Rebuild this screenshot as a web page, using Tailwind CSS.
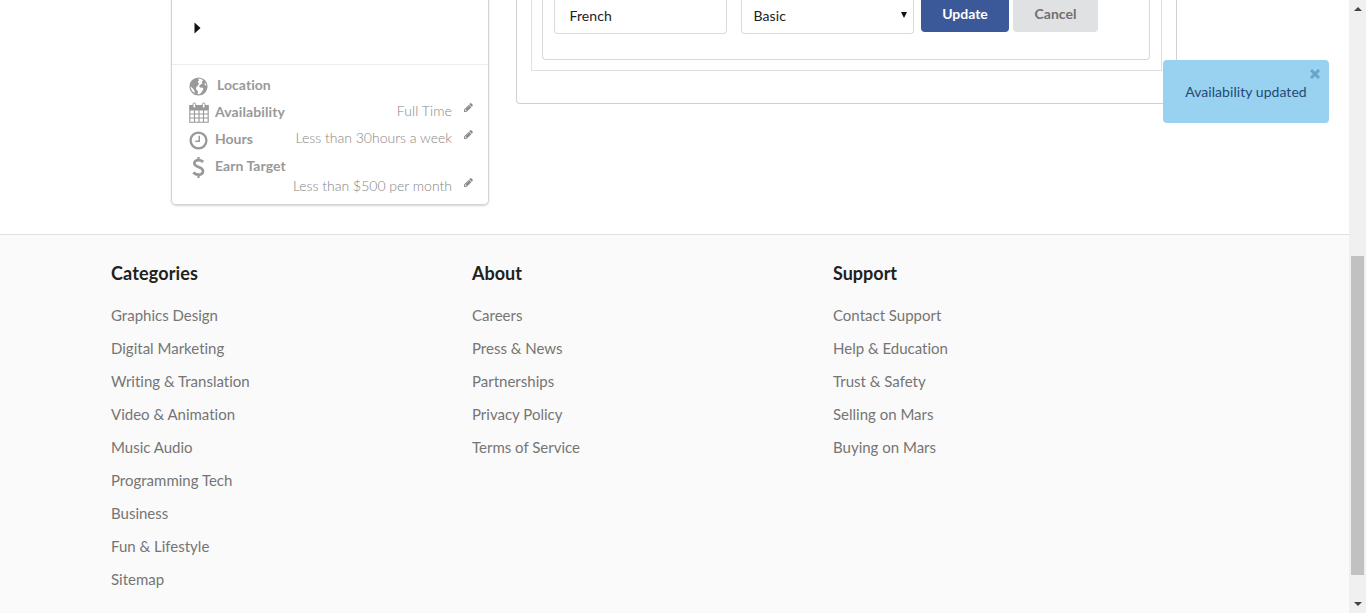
<!DOCTYPE html>
<html lang="en">
<head>
<meta charset="utf-8">
<title>Profile</title>
<script src="https://cdn.jsdelivr.net/npm/@tailwindcss/browser@4"></script>
</head>
<body class="h-[613px] w-[1366px] overflow-hidden bg-white font-['Lato',sans-serif] text-[14px] text-[#212121] [font-variant-ligatures:none]">
<svg class="hidden">
  <symbol id="pencil" viewBox="0 0 1536 1536"><path d="M363 1408l91-91-235-235-91 91v107h128v128h107zM886 480q0-22-22-22-10 0-17 7l-542 542q-7 7-7 17 0 22 22 22 10 0 17-7l542-542q7-7 7-17zM832 288l416 416-832 832H0v-416zM1515 384q0 53-37 90l-166 166-416-416 166-165q36-38 90-38 53 0 91 38l235 234q37 39 37 91z"/></symbol>
</svg>
<div class="flex h-full">
  <div class="flex w-[1349px] flex-col">
    <main class="flex h-[234px] items-start gap-[27px] pl-[171px]">
      <section class="h-[205px] w-[318px] rounded-b-[5px] border border-t-0 border-[#d4d4d5] shadow-[0_1px_2px_0_#d4d4d5]">
        <div class="flex h-[65px] items-start border-b border-[#ededed] pt-[22px] pl-[22px]">
          <svg class="h-[12px] w-[7px]" viewBox="0 0 7 12"><path d="M.5 0.5L6.500 6L.5 11.500z" fill="#111"/></svg>
        </div>
        <div class="pr-[15px] pl-[17px] pt-[7px] text-[#999]">
          <div class="flex h-[27px] items-start">
            <svg class="mt-[5px] mr-[9px] size-[19px]" viewBox="0 0 18 18"><circle cx="9" cy="9" r="8.600" fill="#999"/><path d="M8.500 1.500L11.500 2L13.500 3.200L12 4.500L12.800 6L11 7L9.500 8.800L10.500 10L13 10.200L13.600 11.600L12.500 13.600L10.300 16.300L8 16.200L8.600 13.800L7 12L6.500 10.200L8 8.500L9.500 6.500L8.300 4.500L9.500 3zM1.500 8.800L3.600 10.800L5 12.500L5.500 15.500L3.400 13.800L2 11.500zM14.800 5.200L16 6.500L16.500 8.200L15 7.500z" fill="#fff"/></svg>
            <span class="mt-[3px] leading-5 font-bold tracking-[0.05px]">Location</span>
          </div>
          <div class="flex h-[27px] items-start">
            <svg class="mt-[3px] mr-[6px] h-[21px] w-[20px] shrink-0" viewBox="0 0 20 21" fill="none" stroke="#999"><path d="M1 3.500H19V8H1z" fill="#999"/><path d="M.8 3.500H19.200V20.200H.8zM1 12H19M1 16H19M5.500 8V20M10 8V20M14.500 8V20" stroke-width="1.100"/><rect x="4" y="1" width="2.600" height="5" rx="1.300" fill="#fff"/><rect x="13.400" y="1" width="2.600" height="5" rx="1.300" fill="#fff"/></svg>
            <span class="mt-[3px] leading-5 font-bold tracking-[0.1px]">Availability</span>
            <span class="mt-[2px] ml-auto leading-5 font-light tracking-[0.1px] text-[#858585]">Full Time</span>
            <svg class="mt-[4px] ml-[12px] size-[9px]" fill="#888"><use href="#pencil"/></svg>
          </div>
          <div class="flex h-[27px] items-start">
            <svg class="mt-[5px] mr-[7px] size-[19px] shrink-0" viewBox="0 0 18 18" fill="none" stroke="#999"><circle cx="9" cy="9" r="7.500" stroke-width="2.200"/><path d="M9.700 4.500V9.700H6" stroke-width="1.400"/></svg>
            <span class="mt-[3px] leading-5 font-bold">Hours</span>
            <span class="mt-[2px] ml-auto leading-5 font-light text-[#858585]">Less than 30hours a week</span>
            <svg class="mt-[4px] ml-[12px] size-[9px]" fill="#888"><use href="#pencil"/></svg>
          </div>
          <div class="flex h-[21px] items-start">
            <svg class="mt-[4px] mr-[10px] ml-[3px] h-[21px] w-[13px]" viewBox="0 0 13 21" fill="none" stroke="#999"><path d="M6.500 0V3M6.500 18V21" stroke-width="2.200"/><path d="M11.200 4.900Q9 3.200 6.400 3.200C4 3.200 2.300 4.400 2.300 6.300C2.300 10.700 11 9.200 11 14C11 16.300 9.200 17.700 6.400 17.700Q3.600 17.700 1.300 15.500" stroke-width="2.700"/></svg>
            <span class="mt-[3px] leading-5 font-bold tracking-[0.05px]">Earn Target</span>
          </div>
          <div class="flex items-start">
            <span class="mt-[2px] ml-auto leading-5 font-light text-[#858585]">Less than $500 per month</span>
            <svg class="mt-[4px] ml-[12px] size-[9px]" fill="#888"><use href="#pencil"/></svg>
          </div>
        </div>
      </section>
      <section class="h-[104px] w-[661px] rounded-b-[4px] border border-t-0 border-[#d0d1d2] px-[14px]">
        <div class="h-[71px] border border-t-0 border-[#dfdfe0] pr-[11px] pl-[10px]">
          <div class="flex h-[60px] items-start rounded-b-[4px] border border-t-0 border-[#d8d9da] pl-[11px]">
            <div class="h-[34px] w-[173px] rounded-b-[4px] border border-t-0 border-[#dadbdc] pt-[6px] pl-[14.5px] leading-5 tracking-[0.1px]">French</div>
            <div class="ml-[14px] flex h-[34px] w-[173px] items-start rounded-b-[4px] border border-t-0 border-[#dadbdc] pt-[6px] pr-[6px] pl-[11.5px] leading-5 tracking-[0.1px]">Basic
              <svg class="mt-[6px] ml-auto h-[6px] w-[6px]" viewBox="0 0 6 6"><path d="M0 0H6L3 6z" fill="#111"/></svg>
            </div>
            <div class="ml-[7px] h-[32px] w-[88px] rounded-b-[4px] bg-[#3b5998] pt-[4px] text-center leading-5 font-bold text-white">Update</div>
            <div class="ml-[4px] h-[32px] w-[85px] rounded-b-[4px] bg-[#e0e1e2] pt-[4px] text-center leading-5 font-bold text-[#707070]">Cancel</div>
          </div>
        </div>
      </section>
    </main>
    <footer class="flex flex-1 border-t border-[#e1e1e1] bg-[#fafafa] pt-[27px] pl-[111px] text-[15px] text-[#757575]">
      <div class="w-[361px]">
        <h3 class="mb-[15px] text-[18px] leading-[22px] font-bold tracking-[0.15px] text-[#212121]">Categories</h3>
        <ul class="leading-[33px]"><li>Graphics Design</li><li>Digital Marketing</li><li>Writing &amp; Translation</li><li>Video &amp; Animation</li><li>Music Audio</li><li>Programming Tech</li><li>Business</li><li>Fun &amp; Lifestyle</li><li>Sitemap</li></ul>
      </div>
      <div class="w-[361px]">
        <h3 class="mb-[15px] text-[18px] leading-[22px] font-bold text-[#212121]">About</h3>
        <ul class="leading-[33px]"><li>Careers</li><li>Press &amp; News</li><li>Partnerships</li><li>Privacy Policy</li><li>Terms of Service</li></ul>
      </div>
      <div class="w-[361px]">
        <h3 class="mb-[15px] text-[18px] leading-[22px] font-bold text-[#212121]">Support</h3>
        <ul class="leading-[33px]"><li>Contact Support</li><li>Help &amp; Education</li><li>Trust &amp; Safety</li><li>Selling on Mars</li><li>Buying on Mars</li></ul>
      </div>
    </footer>
  </div>
  <div class="flex w-[17px] flex-col items-center bg-[#f0f0f0] pt-[7px] pb-[7px]">
    <svg class="h-[4px] w-[8px]" viewBox="0 0 8 4"><path d="M4 0L8 4H0z" fill="#444"/></svg>
    <div class="mt-[245px] h-[319px] w-[13px] bg-[#c1c1c1]"></div>
    <svg class="mt-auto h-[4px] w-[8px]" viewBox="0 0 8 4"><path d="M4 4L8 0H0z" fill="#444"/></svg>
  </div>
</div>
<div class="absolute top-[60px] left-[1163px] h-[63px] w-[166px] rounded-[4px] bg-[#99d2f0] pt-[22px] text-center leading-5 tracking-[0.05px] text-[#1f4a75]">Availability updated
  <svg class="absolute top-[9px] right-[9px] size-[10px]" viewBox="0 0 10 10" stroke="#65a5ca" stroke-width="3"><path d="M1 1L9 9M9 1L1 9"/></svg>
</div>
</body>
</html>
